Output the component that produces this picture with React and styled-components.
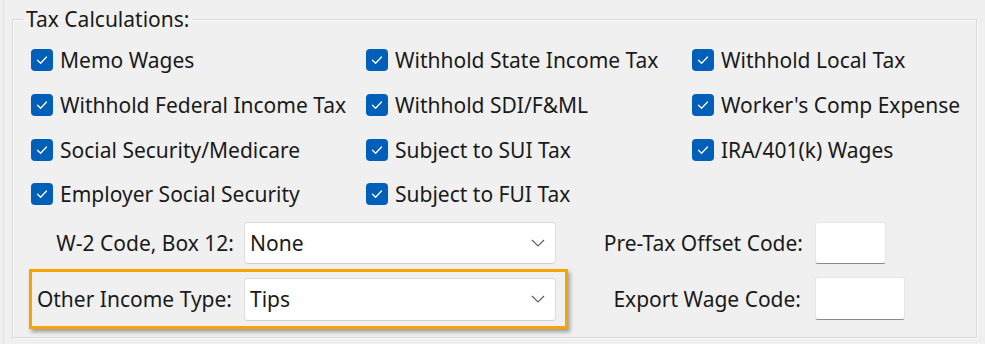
import React from "react";
import styled, { createGlobalStyle } from "styled-components";

const Global = createGlobalStyle`
  html, body { margin: 0; padding: 0; background: #f0f0f0; }
  body { font-family: "Segoe UI", "Noto Sans", "Open Sans", sans-serif; color: #1a1a1a; }
  * { box-sizing: border-box; }
`;

const Page = styled.div`
  width: 982px;
  height: 344px;
  padding: 5px 8px 0 3px;
  border-left: 1px solid #e2e2e2;
  margin-left: 3px;
  overflow: hidden;
`;

const Group = styled.fieldset`
  margin: 0 0 0 5px;
  padding: 0 0 10px 0;
  border: 1px solid #d9d9d9;
  box-shadow: inset 1px 1px 0 #fafafa, 1px 1px 0 #fafafa;
  height: 333px;
`;

const Legend = styled.legend`
  margin-left: 10px;
  padding: 0 3px;
  font-size: 21px;
  line-height: 28px;
`;

const CheckGrid = styled.div`
  display: grid;
  grid-template-columns: 335px 326px 1fr;
  grid-auto-rows: 44.7px;
  padding: 5px 0 0 18px;
`;

const CheckItem = styled.label`
  display: flex;
  align-items: center;
  gap: 7px;
  font-size: 21px;
  white-space: nowrap;
`;

const Box = styled.span`
  width: 22px;
  height: 22px;
  border-radius: 4px;
  background: #005fb8;
  display: inline-flex;
  align-items: center;
  justify-content: center;
  flex: none;
`;

const Check = () => (
  <Box>
    <svg width="12" height="10" viewBox="0 0 12 10">
      <path d="M1.5 5.2 L4.6 8.2 L10.5 2" fill="none" stroke="#fff" strokeWidth="1.3" strokeLinecap="round" strokeLinejoin="round" />
    </svg>
  </Box>
);

const Fields = styled.div`
  display: flex;
  flex-direction: column;
  gap: 2px;
  margin: 2px 0 0 16px;
`;

const Row = styled.div`
  display: flex;
  align-items: center;
`;

const Frame = styled.div`
  width: 539px;
  display: flex;
  align-items: center;
  border: 3px solid ${(p) => (p.$hl ? "#f7a400" : "transparent")};
  padding: ${(p) => (p.$hl ? "6px 7px 5px 0" : "0 7px 0 0")};
  box-shadow: ${(p) => (p.$hl ? "2px 3px 4px rgba(0,0,0,0.35)" : "none")};
`;

const Label = styled.span`
  width: ${(p) => p.$w}px;
  text-align: right;
  font-size: 21px;
  padding-right: ${(p) => p.$pr || 0}px;
  white-space: nowrap;
  flex: none;
`;

const Select = styled.div`
  width: 312px;
  flex: none;
  height: ${(p) => p.$h}px;
  margin-left: 10px;
  background: #fff;
  border: 1px solid #dedede;
  border-bottom-color: #cfcfcf;
  border-radius: 4px;
  display: flex;
  align-items: center;
  justify-content: space-between;
  padding: 0 10px 0 5px;
  font-size: 21px;
`;

const Chevron = () => (
  <svg width="14" height="8" viewBox="0 0 14 8">
    <path d="M1 1 L7 7 L13 1" fill="none" stroke="#5f5f5f" strokeWidth="1.2" />
  </svg>
);

const Input = styled.div`
  width: ${(p) => p.$w}px;
  height: ${(p) => p.$h}px;
  margin-left: 12px;
  background: #fff;
  border: 1px solid #e6e6e6;
  border-bottom: 1px solid #8a8a8a;
  border-radius: 3px;
`;

const items = [
  "Memo Wages", "Withhold State Income Tax", "Withhold Local Tax",
  "Withhold Federal Income Tax", "Withhold SDI/F&ML", "Worker's Comp Expense",
  "Social Security/Medicare", "Subject to SUI Tax", "IRA/401(k) Wages",
  "Employer Social Security", "Subject to FUI Tax", null,
];

export default function App() {
  return (
    <>
      <Global />
      <Page>
        <Group>
          <Legend>Tax Calculations:</Legend>
          <CheckGrid>
            {items.map((t, i) =>
              t ? (
                <CheckItem key={i}>
                  <Check />
                  {t}
                </CheckItem>
              ) : (
                <span key={i} />
              )
            )}
          </CheckGrid>
          <Fields>
            <Row>
              <Frame>
                <Label $w={202}>W-2 Code, Box 12:</Label>
                <Select $h={42}>None<Chevron /></Select>
              </Frame>
              <Label $w={235}>Pre-Tax Offset Code:</Label>
              <Input $w={71} $h={42} />
            </Row>
            <Row>
              <Frame $hl>
                <Label $w={202} $pr={2}>Other Income Type:</Label>
                <Select $h={43}>Tips<Chevron /></Select>
              </Frame>
              <Label $w={235} $pr={2}>Export Wage Code:</Label>
              <Input $w={90} $h={43} />
            </Row>
          </Fields>
        </Group>
      </Page>
    </>
  );
}
